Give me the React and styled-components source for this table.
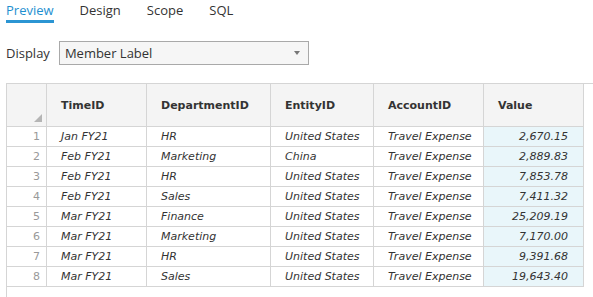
import styled, { createGlobalStyle } from "styled-components"

const rows = [
    ["Jan FY21", "HR", "United States", "Travel Expense", "2,670.15"],
    ["Feb FY21", "Marketing", "China", "Travel Expense", "2,889.83"],
    ["Feb FY21", "HR", "United States", "Travel Expense", "7,853.78"],
    ["Feb FY21", "Sales", "United States", "Travel Expense", "7,411.32"],
    ["Mar FY21", "Finance", "United States", "Travel Expense", "25,209.19"],
    ["Mar FY21", "Marketing", "United States", "Travel Expense", "7,170.00"],
    ["Mar FY21", "HR", "United States", "Travel Expense", "9,391.68"],
    ["Mar FY21", "Sales", "United States", "Travel Expense", "19,643.40"],
]

const columns = [
    { title: "TimeID", width: 100 },
    { title: "DepartmentID", width: 124 },
    { title: "EntityID", width: 103 },
    { title: "AccountID", width: 110 },
    { title: "Value", width: 100 },
]

export default function App() {
    return (
        <Page>
            <GlobalStyle />
            <Tabs>
                <Tab active>Preview</Tab>
                <Tab>Design</Tab>
                <Tab>Scope</Tab>
                <Tab>SQL</Tab>
            </Tabs>
            <DisplayRow>
                <label>Display</label>
                <Select>
                    Member Label
                    <Arrow />
                </Select>
            </DisplayRow>
            <Grid>
                <Table>
                    <colgroup>
                        <col style={{ width: 40 }} />
                        {columns.map((c) => <col key={c.title} style={{ width: c.width }} />)}
                    </colgroup>
                    <thead>
                        <tr>
                            <Corner><Triangle /></Corner>
                            {columns.map((c) => <HeadCell key={c.title}>{c.title}</HeadCell>)}
                        </tr>
                    </thead>
                    <tbody>
                        {rows.map((r, i) => (
                            <tr key={i}>
                                <RowNum>{i + 1}</RowNum>
                                {r.map((v, j) => (
                                    <Cell key={j} value={j === 4}>{v}</Cell>
                                ))}
                            </tr>
                        ))}
                    </tbody>
                </Table>
            </Grid>
        </Page>
    )
}

const GlobalStyle = createGlobalStyle`
body{
    margin: 0;
    background: #ffffff;
    overflow: hidden;
}
`

//everything on the page
const Page = styled.div`
height: 297px;
display: flex;
flex-direction: column;
font-family: "Open Sans", "Noto Sans", sans-serif;
color: #333333;
`

//top tabs
const Tabs = styled.div`
display: flex;
gap: 26px;
padding-left: 6px;
height: 23px;
`
const Tab = styled.div`
font-size: 13px;
line-height: 21px;
height: 20px;
color: ${(p) => (p.active ? "#1e8fd0" : "#333333")};
border-bottom: 3px solid ${(p) => (p.active ? "#2b95d3" : "transparent")};
`

// display selector
const DisplayRow = styled.div`
display: flex;
align-items: center;
gap: 9px;
padding-left: 6px;
margin-top: 18px;
label{
    font-size: 13px;
    color: #333333;
}
`
const Select = styled.div`
position: relative;
width: 250px;
height: 24px;
box-sizing: border-box;
border: 1px solid #a9a9a9;
background: #f6f6f6;
font-size: 13px;
line-height: 22px;
padding-left: 5px;
color: #333333;
`
const Arrow = styled.span`
position: absolute;
right: 8px;
top: 9px;
border-left: 3px solid transparent;
border-right: 3px solid transparent;
border-top: 4px solid #777777;
`

// grid with the data
const Grid = styled.div`
margin: 18px 0 0 6px;
flex: 1;
border-left: 1px solid #d5d5d5;
border-top: 1px solid #d5d5d5;
`
const Table = styled.table`
border-collapse: separate;
border-spacing: 0;
table-layout: fixed;
width: 577px;
font-family: "DejaVu Sans", Verdana, sans-serif;
font-size: 11px;
td, th{
    box-sizing: border-box;
    border-right: 1px solid #d5d5d5;
    border-bottom: 1px solid #d5d5d5;
    padding: 0;
    white-space: nowrap;
    overflow: hidden;
}
`
const Corner = styled.th`
position: relative;
height: 43px;
background: #f4f4f4;
`
const Triangle = styled.span`
position: absolute;
right: 4px;
bottom: 4px;
border-left: 8px solid transparent;
border-bottom: 8px solid #b5b5b5;
`
const HeadCell = styled.th`
height: 43px;
background: #f4f4f4;
text-align: left;
padding-left: 14px !important;
font-weight: bold;
color: #333333;
`
const RowNum = styled.td`
height: 20px;
text-align: right;
padding-right: 6px !important;
color: #999999;
`
const Cell = styled.td`
height: 20px;
font-style: italic;
color: #333333;
text-align: ${(p) => (p.value ? "right" : "left")};
padding: ${(p) => (p.value ? "0 15px 0 0" : "0 0 0 14px")} !important;
background: ${(p) => (p.value ? "#e9f6fa" : "transparent")};
`
